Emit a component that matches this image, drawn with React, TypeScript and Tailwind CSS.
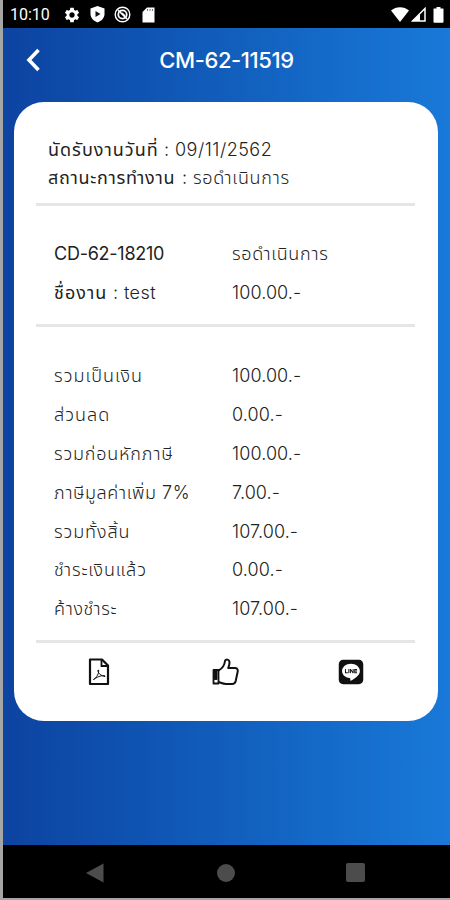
import React from 'react';
import clsx from 'clsx';
import { FaLine } from 'react-icons/fa';
import { MdSettings, MdSdCard, MdBatteryFull } from 'react-icons/md';

interface AmountRow {
    label: string;
    value: string;
    labelClass: string;
}

const rows: AmountRow[] = [
    { label: 'รวมเป็นเงิน', value: '100.00.-', labelClass: 'tracking-[1px]' },
    { label: 'ส่วนลด', value: '0.00.-', labelClass: 'tracking-[1px]' },
    { label: 'รวมก่อนหักภาษี', value: '100.00.-', labelClass: 'tracking-[0.8px]' },
    { label: 'ภาษีมูลค่าเพิ่ม 7%', value: '7.00.-', labelClass: 'tracking-[0.55px]' },
    { label: 'รวมทั้งสิ้น', value: '107.00.-', labelClass: 'tracking-[0.9px]' },
    { label: 'ชำระเงินแล้ว', value: '0.00.-', labelClass: 'tracking-[0.85px]' },
    { label: 'ค้างชำระ', value: '107.00.-', labelClass: 'tracking-[0.6px]' },
];

const StatusBar = () => (
    <div className="flex h-7 items-center bg-black pl-[7px] pr-1.5 pt-px text-white">
        <span className="w-[53px] font-['Roboto',sans-serif] text-[16px] leading-7">10:10</span>
        <MdSettings className="size-[18px]" />
        <svg className="ml-2 size-[17px]" viewBox="0 0 17 17">
            <path d="M8.5 0 15.500 2.500v5.500c0 4-3 7-7 8.500C4.600 15 1.500 12 1.500 8V2.500Z" fill="currentColor" />
            <path d="m6.500 5 5 3-5 3Z" fill="#111" />
        </svg>
        <svg className="ml-2 size-[17px]" viewBox="0 0 17 17" fill="none" stroke="currentColor">
            <circle cx="8.500" cy="8.500" r="7.300" strokeWidth="1.400" />
            <circle cx="8.500" cy="8.500" r="4.200" strokeWidth="1.800" />
            <path d="m4 4 9 9M8 7l3 3" strokeWidth="1.600" />
        </svg>
        <svg className="ml-[11px] h-4 w-[13px]" viewBox="0 0 13 16">
            <path d="M5 .5h7.500v15H.5V5Z" fill="currentColor" />
            <path d="M5.500 2v2M8 2v2M10.500 2v2" stroke="#777" />
        </svg>
        <div className="ml-auto flex items-center">
            <svg className="h-[15px] w-[18px]" viewBox="0 0 18 15">
                <path d="M0 3.500C5-1 13-1 18 3.500L9 15Z" fill="currentColor" />
            </svg>
            <svg className="ml-0.5 size-[15px]" viewBox="0 0 15 15">
                <path d="M14 1.500V14H1.500Z" fill="none" stroke="currentColor" strokeWidth="1.500" />
                <path d="M9 7v7H1Z" fill="currentColor" />
            </svg>
            <svg className="ml-[7px] h-4 w-[11px]" viewBox="0 0 11 16">
                <path d="M3.500 0h4v1.500H10q.500 0 .5.500v13q0 .8-.8.8H1.300q-.8 0-.8-.8V2q0-.5.500-.5h2.500Z" fill="currentColor" />
            </svg>
        </div>
    </div>
);

const Divider = () => <div className="mr-px h-[3px] shrink-0 bg-[#e6e6e6]" />;

const PdfIcon = () => (
    <svg className="h-7 w-[22px]" viewBox="0 0 22 28" fill="none" stroke="#111">
        <path d="M2 1.500h12l6 6V26H2Z" strokeWidth="2.200" strokeLinejoin="round" />
        <path d="M13.500 2v6H20" strokeWidth="1.800" />
        <path d="M5.500 21.500c3-1.500 6-7 5-9.500-1.500-.5-.5 5.500 6.500 6.500 1-2-6-1-11.500 3Z" strokeWidth="1" />
    </svg>
);

const LikeIcon = () => (
    <svg className="h-7 w-[27px]" viewBox="0 0 27 28" fill="none" stroke="#111" strokeLinejoin="round">
        <path d="M1.500 12h5v13.500h-5Z" strokeWidth="1.800" />
        <path d="M2.500 12.500H5v9H2.500Z" fill="#111" />
        <path
            d="M6.500 12.500c3-1.500 6-5 6.500-9.500.3-2.200 4.500-2 4.500 1.500 0 2.500-.8 4-1.300 5.500H23c3.200 0 3 3 2.400 5l-1.700 8c-.5 2-1.500 3-3.500 3H14c-3 0-4.500-1-7.500-2"
            strokeWidth="2"
        />
    </svg>
);

const NavBar = () => (
    <div className="flex h-[53px] items-center bg-black pt-0.5 text-[#4c4c4c]">
        <svg className="ml-[83px] h-5 w-[18px]" viewBox="0 0 18 20">
            <path d="M17.500.5v19L0 10Z" fill="currentColor" />
        </svg>
        <div className="ml-[113px] size-[18px] rounded-full bg-[#4c4c4c]" />
        <div className="ml-[111px] size-[19px] rounded-[2px] bg-[#4c4c4c]" />
    </div>
);

export default function App() {
    return (
        <div className="h-[900px] w-[450px] overflow-hidden border-b-2 border-l-[3px] border-[#a5a5a5] bg-black font-['Inter','Noto_Sans_Thai','Noto_Sans',sans-serif] text-[#222]">
            <StatusBar />
            <div className="h-[817px] bg-gradient-to-r from-[#0d43a1] to-[#1979d8]">
                <header className="relative flex h-[74px] items-center justify-center pb-2.5">
                    <svg className="absolute left-[22px] top-5 h-6 w-4" viewBox="0 0 16 24" fill="none" stroke="#fff">
                        <path d="M13.500 2 4 12l9.500 10" strokeWidth="3.600" />
                    </svg>
                    <h1 className="text-[22px] font-medium tracking-[-0.4px] text-white">CM-62-11519</h1>
                </header>
                <main className="ml-[11px] flex h-[619px] w-[424px] flex-col rounded-[30px] bg-white px-[22px] text-[18px] font-light">
                    <div className="h-[101px] shrink-0 pl-3 pt-[34px] leading-7">
                        <p className="flex">
                            <b className="w-[116px] whitespace-nowrap tracking-[1px]">นัดรับงานวันที่</b>
                            <span className="w-[11px]">:</span>
                            <span className="tracking-[0.5px]">09/11/2562</span>
                        </p>
                        <p className="flex">
                            <b className="w-[134px] whitespace-nowrap tracking-[0.7px]">สถานะการทำงาน</b>
                            <span className="w-[11px]">:</span>
                            <span className="tracking-[0.7px]">รอดำเนินการ</span>
                        </p>
                    </div>
                    <Divider />
                    <div className="grid h-[118px] shrink-0 grid-cols-[178px_1fr] content-start gap-y-[11px] pl-[18px] pt-[34px] leading-7">
                        <b className="tracking-[-0.25px]">CD-62-18210</b>
                        <span className="tracking-[0.65px]">รอดำเนินการ</span>
                        <div className="flex">
                            <b className="w-[59px] tracking-[1px]">ชื่องาน</b>
                            <span className="w-[11px]">:</span>
                            <span className="tracking-[0.4px]">test</span>
                        </div>
                        <span className="tracking-[0.1px]">100.00.-</span>
                    </div>
                    <Divider />
                    <div className="h-[313px] shrink-0 pl-[18px] pt-[29px]">
                        {rows.map((row) => (
                            <div key={row.label} className="grid h-[38.9px] grid-cols-[178px_1fr] items-center">
                                <span className={clsx('whitespace-nowrap', row.labelClass)}>{row.label}</span>
                                <span className="tracking-[0.1px]">{row.value}</span>
                            </div>
                        ))}
                    </div>
                    <Divider />
                    <div className="grid grid-cols-3 justify-items-center pr-0.5 pt-[15px]">
                        <PdfIcon />
                        <LikeIcon />
                        <FaLine className="size-7 text-[#111]" />
                    </div>
                </main>
            </div>
            <NavBar />
        </div>
    );
}
